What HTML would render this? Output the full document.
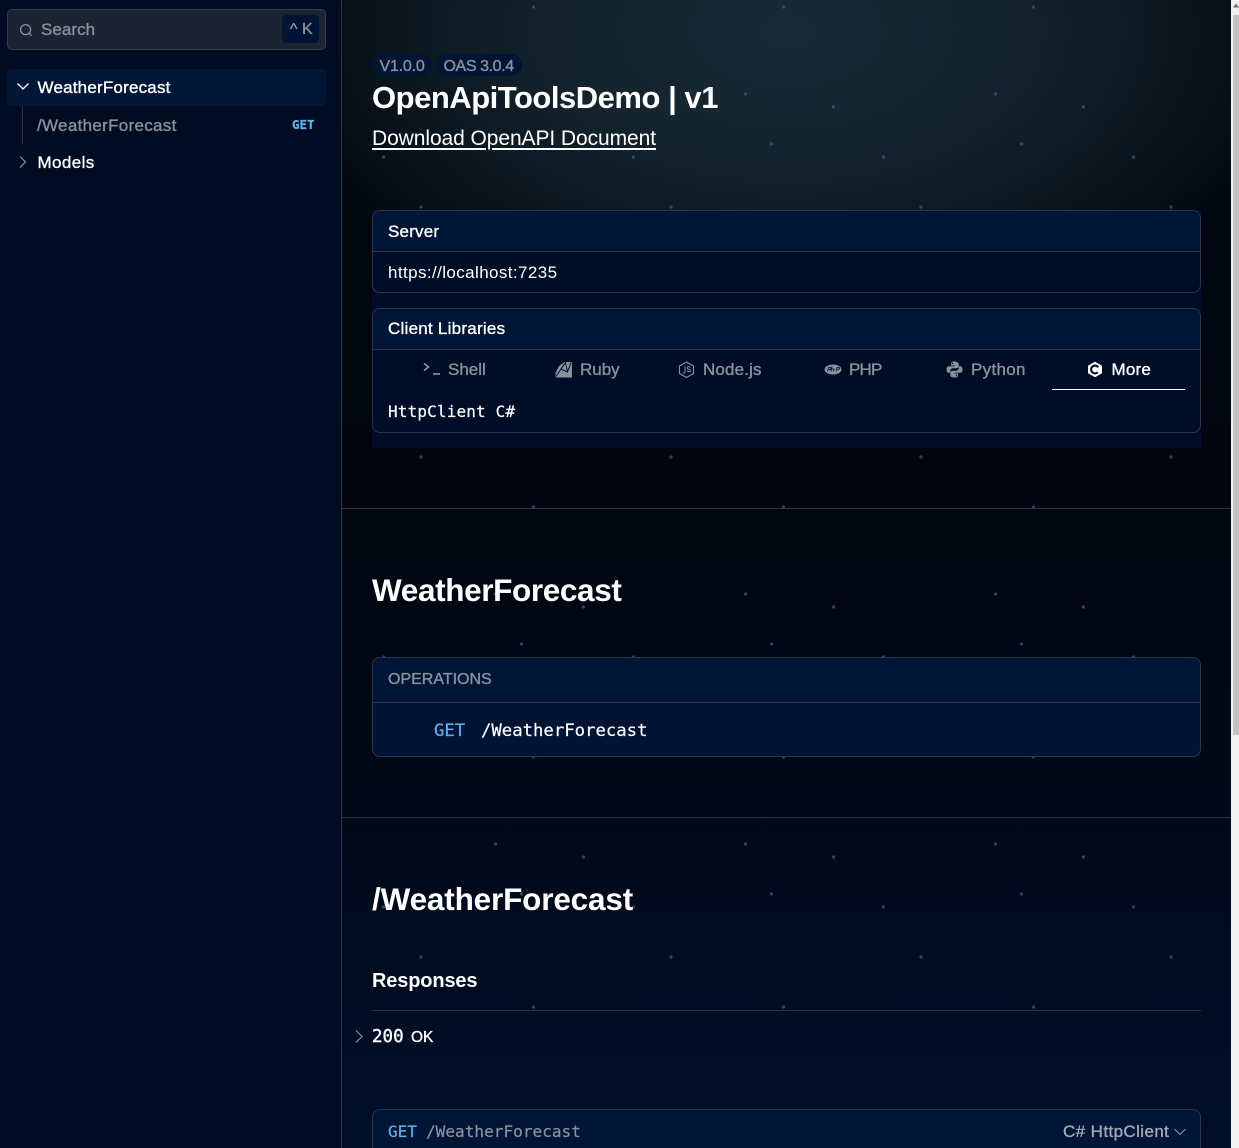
<!DOCTYPE html>
<html lang="en"><head><meta charset="utf-8"><title>OpenApiToolsDemo | v1</title>
<style>
*{box-sizing:border-box}
html,body{margin:0;padding:0;width:1239px;height:1148px;overflow:hidden;background:#010b22;color:#fff;font-family:"Liberation Sans",sans-serif}
#root{position:relative;width:1239px;height:1148px;overflow:hidden}
.t{position:absolute;white-space:nowrap;line-height:20px}
.m{font-family:"DejaVu Sans Mono","Liberation Mono",monospace;-webkit-text-stroke:.2px currentColor}
.med{-webkit-text-stroke:.35px currentColor}
.sb{position:absolute;left:0;top:0;width:342px;height:1148px;background:#010b22;border-right:1px solid #2b3442}
.main{position:absolute;left:342px;top:0;width:889px;height:1148px;overflow:hidden;background:linear-gradient(180deg,#01060f 0,#01060f 300px,#01050f 480px,#010918 800px,#010f29 1148px)}
.glow{position:absolute;left:0;top:0;width:889px;height:420px;background:radial-gradient(ellipse 540px 320px at 445px 30px,#182a36 0,#14242f 40%,#0a151e 75%,rgba(1,6,15,0) 100%)}
.dots{position:absolute;left:-342px;top:0}
.hr{position:absolute;height:1px;background:#2b3442}
.back{position:absolute;left:372px;top:210px;width:829px;height:238px;background:#010d27}
.card{position:absolute;left:372px;width:829px;border:1px solid #2b3748;border-radius:8px;background:#000d26;overflow:hidden}
.head{position:absolute;left:0;right:0;top:0;background:#011536;border-bottom:1px solid #2b3748}
.scroll{position:absolute;left:1231px;top:0;width:8px;height:1148px;background:#f1f1f1}
.thumb{position:absolute;left:2px;top:15px;width:6px;height:720px;background:#c1c1c1}
svg{position:absolute;display:block}
a{color:inherit}
</style></head><body><div id="root">

<div class="main">
  <div class="glow"></div>
  <svg class="dots" width="1239" height="1020"><defs><pattern id="p" x="0" y="0" width="250" height="250" patternUnits="userSpaceOnUse">
    <circle cx="33.5" cy="7" r="1.6" fill="#3a5680" opacity=".75"/><circle cx="245.5" cy="94" r="1.6" fill="#3a5680" opacity=".75"/><circle cx="83.5" cy="107" r="1.6" fill="#3a5680" opacity=".75"/><circle cx="21.5" cy="144" r="1.6" fill="#3a5680" opacity=".75"/><circle cx="133.5" cy="157" r="1.6" fill="#3a5680" opacity=".75"/><circle cx="171" cy="207" r="1.6" fill="#3a5680" opacity=".75"/>
  </pattern></defs><rect width="1239" height="1020" fill="url(#p)"/></svg>
</div>

<div class="hr" style="left:342px;width:889px;top:508px"></div>
<div class="hr" style="left:342px;width:889px;top:817px"></div>

<div class="sb"></div>
<div style="position:absolute;left:7px;top:9px;width:319px;height:41px;background:#1a2432;border:1px solid #363f4d;border-radius:5px"></div>
<svg style="left:19px;top:23px" width="14" height="14" viewBox="0 0 14 14" fill="none" stroke="#8b929c" stroke-width="1.3"><circle cx="6.6" cy="6.6" r="5"/><path d="M10.3 10.3l2.4 2.4"/></svg>
<div class="t med" style="left:41px;top:20px;font-size:17px;color:#8b929c;letter-spacing:.05px">Search</div>
<div style="position:absolute;left:282px;top:15px;width:37px;height:28px;background:#021434;border-radius:4px"></div>
<div class="t med" style="left:290px;top:20px;font-size:16px;color:#8b929c;letter-spacing:0">^ K</div>

<div style="position:absolute;left:7px;top:69px;width:319px;height:37px;background:#021738;border-radius:4px"></div>
<svg style="left:16px;top:81px" width="14" height="12" viewBox="0 0 14 12" fill="none" stroke="#fff" stroke-width="1.3"><path d="M1.5 2.5l5.5 5.500 5.500-5.500"/></svg>
<div class="t med" style="left:37.500px;top:78px;font-size:17px;letter-spacing:.2px">WeatherForecast</div>
<div style="position:absolute;left:22px;top:106px;width:1px;height:38px;background:#2b3442"></div>
<div class="t med" style="left:37px;top:116px;font-size:17px;color:#8b929c;letter-spacing:.3px">/WeatherForecast</div>
<div class="t m" style="left:292px;top:115px;font-size:12.5px;font-weight:bold;color:#5db3ec">GET</div>
<svg style="left:17px;top:155px" width="12" height="14" viewBox="0 0 12 14" fill="none" stroke="#8b929c" stroke-width="1.2"><path d="M3 1.5l5.500 5.500L3 12.500"/></svg>
<div class="t med" style="left:37.500px;top:153px;font-size:17px;letter-spacing:.4px">Models</div>

<div style="position:absolute;left:372px;top:54px;width:59px;height:22px;border-radius:11px;background:#021534"></div>
<div style="position:absolute;left:436px;top:54px;width:86px;height:22px;border-radius:11px;background:#021534"></div>
<div class="t med" style="left:379.500px;top:56.500px;font-size:16px;color:#8b929c;letter-spacing:-.2px">V1.0.0</div>
<div class="t med" style="left:443.500px;top:56.500px;font-size:16px;color:#8b929c;letter-spacing:-.4px">OAS 3.0.4</div>
<div class="t" style="left:372px;top:78px;font-size:31px;line-height:40px;font-weight:bold;letter-spacing:-.48px">OpenApiToolsDemo | v1</div>
<div class="t" style="left:372px;top:129px;font-size:21px;letter-spacing:-.08px"><a href="#d" style="text-underline-offset:3px">Download OpenAPI Document</a></div>

<div class="back"></div>
<div class="card" style="top:210px;height:83px"><div class="head" style="height:41px"></div></div>
<div class="t med" style="left:388px;top:222px;font-size:17px;letter-spacing:.2px">Server</div>
<div class="t" style="left:388px;top:263px;font-size:17px;letter-spacing:.4px">https://localhost:7235</div>

<div class="card" style="top:308px;height:125px"><div class="head" style="height:41px"></div></div>
<div class="t med" style="left:388px;top:319px;font-size:17px;letter-spacing:.25px">Client Libraries</div>

<svg style="left:423px;top:362px" width="18" height="14" viewBox="0 0 18 14" fill="none" stroke="#8b929c" stroke-width="1.6"><path d="M1 1.500l4.500 3.500L1 8.500"/><path d="M10 12h7"/></svg>
<div class="t med" style="left:448px;top:360px;font-size:17px;color:#8b929c">Shell</div>

<svg style="left:555px;top:361px" width="18" height="17" viewBox="0 0 18 17"><path d="M.5 12L4 5 9.500 1H17v15.500H.5z" fill="#8b929c"/><path d="M1 15.500L6 8l6.500 3L16 1.500M6 8L10.500 1.500 12.500 11" fill="none" stroke="#010d27" stroke-width="1"/></svg>
<div class="t med" style="left:580px;top:360px;font-size:17px;color:#8b929c">Ruby</div>

<svg style="left:678px;top:361px" width="17" height="17" viewBox="0 0 17 17" fill="none" stroke="#8b929c" stroke-width="1.1"><path d="M8.500 1l7 4v7.500l-7 4-7-4V5z"/><path d="M7 5.500v5.500c0 1.300-1.600 1.300-2.200.6" stroke-width="1"/><path d="M12.300 6.500c-.8-1.200-3-1-3 .4 0 1.700 3.100.9 3.100 2.700 0 1.500-2.600 1.500-3.400.2" stroke-width="1"/></svg>
<div class="t med" style="left:703px;top:360px;font-size:17px;color:#8b929c;letter-spacing:.15px">Node.js</div>

<svg style="left:824px;top:364px" width="18" height="11" viewBox="0 0 18 11"><ellipse cx="9" cy="5.500" rx="8.500" ry="5" fill="#8b929c"/><path d="M3.500 7.500l1-4h2c1 0 .8 2-.6 2H4.500M8 2.500l-1 5M7.500 5h2.500l-.5 2.500M12 7.500l1-4h2c1 0 .8 2-.6 2H13" fill="none" stroke="#010d27" stroke-width=".8"/></svg>
<div class="t med" style="left:849px;top:360px;font-size:17px;color:#8b929c;letter-spacing:-.8px">PHP</div>

<svg style="left:946px;top:361px" width="17" height="17" viewBox="0 0 17 17" fill="#8b929c"><path d="M8.300.5C5.500.5 5 1.700 5 2.800V4.500h3.600v.7H3C1.400 5.200.5 6.500.5 8.500s.9 3.300 2.500 3.300h1.300V10c0-1.500 1.200-2.700 2.700-2.700h3.500c1.200 0 2.200-1 2.200-2.200V2.800C12.200 1.500 11 .5 8.300.5zM6.500 1.700a.7.7 0 110 1.400.7.7 0 010-1.400z"/><path d="M8.700 16.500c2.800 0 3.300-1.200 3.300-2.300v-1.700H8.400v-.7H14c1.600 0 2.500-1.300 2.500-3.300s-.9-3.300-2.500-3.300h-1.300V7c0 1.500-1.200 2.700-2.700 2.700H6.500c-1.200 0-2.200 1-2.200 2.200v2.300c0 1.300 1.700 2.300 4.400 2.300zm1.800-1.200a.7.7 0 110-1.400.7.7 0 010 1.400z"/></svg>
<div class="t med" style="left:971px;top:360px;font-size:17px;color:#8b929c;letter-spacing:.3px">Python</div>

<svg style="left:1087px;top:361px" width="16" height="17" viewBox="0 0 16 17"><path d="M8 .8l7 4v7.400l-7 4-7-4V4.800z" fill="#fff"/><circle cx="8" cy="8.500" r="3.900" fill="none" stroke="#010d27" stroke-width="2.100" stroke-dasharray="19 6" stroke-dashoffset="-3"/></svg>
<div class="t med" style="left:1111.500px;top:360px;font-size:17px;letter-spacing:.2px">More</div>
<div style="position:absolute;left:1052px;top:389px;width:133px;height:1px;background:#fff"></div>
<div class="t m" style="left:388px;top:402px;font-size:16px;letter-spacing:.15px">HttpClient C#</div>

<div class="t" style="left:372px;top:570px;font-size:31.500px;line-height:40px;font-weight:bold;letter-spacing:-.37px">WeatherForecast</div>

<div class="card" style="top:657px;height:100px;background:#011434"><div class="head" style="height:45px"></div></div>
<div class="t med" style="left:388px;top:670px;font-size:16px;color:#8b929c;letter-spacing:0">OPERATIONS</div>
<div class="t m" style="left:434px;top:721px;font-size:17.300px;color:#5db3ec">GET</div>
<div class="t m" style="left:481px;top:721px;font-size:17.300px">/WeatherForecast</div>

<div class="t" style="left:372px;top:879px;font-size:31.500px;line-height:40px;font-weight:bold;letter-spacing:-.17px">/WeatherForecast</div>
<div class="t" style="left:372px;top:971px;font-size:20px;letter-spacing:-.15px;font-weight:bold">Responses</div>
<div class="hr" style="left:372px;width:829px;top:1010px"></div>
<svg style="left:353px;top:1029px" width="12" height="15" viewBox="0 0 12 15" fill="none" stroke="#8b929c" stroke-width="1.200"><path d="M3 1.500l6 6-6 6"/></svg>
<div class="t m" style="left:372px;top:1027px;font-size:17.500px;-webkit-text-stroke:.4px currentColor">200</div>
<div class="t med" style="left:411px;top:1028px;font-size:15.500px">OK</div>

<div class="card" style="top:1109px;height:60px;background:#011536"></div>
<div class="t m" style="left:388px;top:1122px;font-size:16px;color:#5db3ec">GET</div>
<div class="t m" style="left:426px;top:1122px;font-size:16px;color:#8b929c;letter-spacing:.05px">/WeatherForecast</div>
<div class="t med" style="left:1063px;top:1122px;font-size:17px;color:#a3a9b2;letter-spacing:.4px">C# HttpClient</div>
<svg style="left:1173px;top:1127px" width="14" height="10" viewBox="0 0 14 10" fill="none" stroke="#8b929c" stroke-width="1.100"><path d="M1.500 2l5.500 5.500L12.500 2"/></svg>

<div class="scroll"><svg style="left:2px;top:3px" width="6" height="5" viewBox="0 0 6 5"><path d="M3 .5L6 4.500H0z" fill="#6e6e6e"/></svg><div class="thumb"></div></div>
</div></body></html>
